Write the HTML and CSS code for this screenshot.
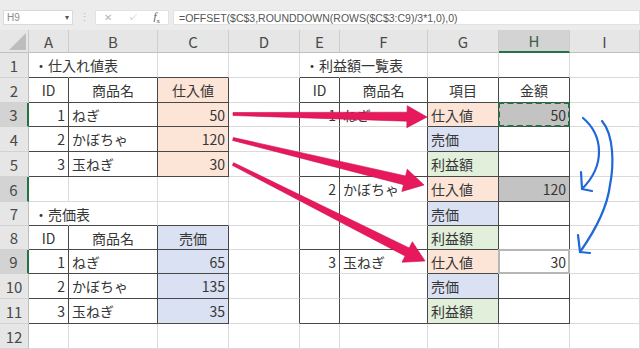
FILE: index.html
```html
<!DOCTYPE html>
<html lang="ja">
<head>
    <meta charset="UTF-8">
    <meta name="viewport" content="width=device-width, initial-scale=1.0">
    <link rel="stylesheet" href="styles.css">
    <title>利益額一覧表</title>
</head>
<body>

<div class="wrap">
    <div class="fbar">
        <div class="namebox"><span>H9</span><span class="dd">▾</span></div>
        <div class="grip">⋮</div>
        <div class="btns"><span>✕</span><span>✓</span><span class="fx"><i>f</i><sub>x</sub></span></div>
        <div class="formula">=OFFSET($C$3,ROUNDDOWN(ROWS($C$3:C9)/3*1,0),0)</div>
    </div>

    <div class="hdr">
        <div class="corner"><span class="tri"></span></div>
        <div class="ch">A</div>
        <div class="ch">B</div>
        <div class="ch">C</div>
        <div class="ch">D</div>
        <div class="ch">E</div>
        <div class="ch">F</div>
        <div class="ch">G</div>
        <div class="ch on">H</div>
        <div class="ch">I</div>
    </div>

    <!-- 1 -->
    <div class="row">
        <div class="rh">1</div>
        <div class="c title bb">・仕入れ値表</div>
        <div class="c bb"></div>
        <div class="c bb"></div>
        <div class="c"></div>
        <div class="c title bb">・利益額一覧表</div>
        <div class="c bb"></div>
        <div class="c bb"></div>
        <div class="c bb"></div>
        <div class="c"></div>
    </div>
    <!-- 2 -->
    <div class="row">
        <div class="rh">2</div>
        <div class="c m bx">ID</div>
        <div class="c m bx">商品名</div>
        <div class="c m bx peach">仕入値</div>
        <div class="c br"></div>
        <div class="c m bx">ID</div>
        <div class="c m bx">商品名</div>
        <div class="c m bx">項目</div>
        <div class="c m bx">金額</div>
        <div class="c"></div>
    </div>
    <!-- 3 -->
    <div class="row short">
        <div class="rh on">3</div>
        <div class="c r bx">1</div>
        <div class="c bx">ねぎ</div>
        <div class="c r bx peach">50</div>
        <div class="c br"></div>
        <div class="c r br">1</div>
        <div class="c br">ねぎ</div>
        <div class="c bx peach">仕入値</div>
        <div class="c r bx sel copy">50</div>
        <div class="c"></div>
    </div>
    <!-- 4 -->
    <div class="row">
        <div class="rh">4</div>
        <div class="c r bx">2</div>
        <div class="c bx">かぼちゃ</div>
        <div class="c r bx peach">120</div>
        <div class="c br"></div>
        <div class="c br"></div>
        <div class="c br"></div>
        <div class="c bx blue">売価</div>
        <div class="c bx"></div>
        <div class="c"></div>
    </div>
    <!-- 5 -->
    <div class="row">
        <div class="rh">5</div>
        <div class="c r bx">3</div>
        <div class="c bx">玉ねぎ</div>
        <div class="c r bx peach">30</div>
        <div class="c br"></div>
        <div class="c bx"></div>
        <div class="c bx"></div>
        <div class="c bx green">利益額</div>
        <div class="c bx"></div>
        <div class="c"></div>
    </div>
    <!-- 6 -->
    <div class="row">
        <div class="rh on">6</div>
        <div class="c"></div>
        <div class="c"></div>
        <div class="c"></div>
        <div class="c br"></div>
        <div class="c r br">2</div>
        <div class="c br">かぼちゃ</div>
        <div class="c bx peach">仕入値</div>
        <div class="c r bx sel">120</div>
        <div class="c"></div>
    </div>
    <!-- 7 -->
    <div class="row short">
        <div class="rh">7</div>
        <div class="c title bb">・売価表</div>
        <div class="c bb"></div>
        <div class="c bb"></div>
        <div class="c br"></div>
        <div class="c br"></div>
        <div class="c br"></div>
        <div class="c bx blue">売価</div>
        <div class="c bx"></div>
        <div class="c"></div>
    </div>
    <!-- 8 -->
    <div class="row short">
        <div class="rh">8</div>
        <div class="c m bx">ID</div>
        <div class="c m bx">商品名</div>
        <div class="c m bx blue">売価</div>
        <div class="c br"></div>
        <div class="c bx"></div>
        <div class="c bx"></div>
        <div class="c bx green">利益額</div>
        <div class="c bx"></div>
        <div class="c"></div>
    </div>
    <!-- 9 -->
    <div class="row short">
        <div class="rh on">9</div>
        <div class="c r bx">1</div>
        <div class="c bx">ねぎ</div>
        <div class="c r bx blue">65</div>
        <div class="c br"></div>
        <div class="c r br">3</div>
        <div class="c br">玉ねぎ</div>
        <div class="c bx peach">仕入値</div>
        <div class="c r bx active">30</div>
        <div class="c"></div>
    </div>
    <!-- 10 -->
    <div class="row">
        <div class="rh">10</div>
        <div class="c r bx">2</div>
        <div class="c bx">かぼちゃ</div>
        <div class="c r bx blue">135</div>
        <div class="c br"></div>
        <div class="c br"></div>
        <div class="c br"></div>
        <div class="c bx blue">売価</div>
        <div class="c bx"></div>
        <div class="c"></div>
    </div>
    <!-- 11 -->
    <div class="row">
        <div class="rh">11</div>
        <div class="c r bx">3</div>
        <div class="c bx">玉ねぎ</div>
        <div class="c r bx blue">35</div>
        <div class="c br"></div>
        <div class="c bx"></div>
        <div class="c bx"></div>
        <div class="c bx green">利益額</div>
        <div class="c bx"></div>
        <div class="c"></div>
    </div>
    <!-- 12 -->
    <div class="row">
        <div class="rh">12</div>
        <div class="c"></div>
        <div class="c"></div>
        <div class="c"></div>
        <div class="c"></div>
        <div class="c"></div>
        <div class="c"></div>
        <div class="c"></div>
        <div class="c"></div>
        <div class="c"></div>
    </div>

    <!-- 手書きの注釈 -->
    <svg class="notes" width="640" height="349" viewBox="0 0 640 349">
        <g class="red">
            <polygon points="233,112.5 407.1,112.2 407.2,105.7 427,117 406.8,127.7 406.9,121.2 233,115.5"/>
            <polygon points="233.35,137.54 405.61,175.95 407.25,169.14 424,185 401.87,191.5 403.51,184.69 232.65,140.46"/>
            <polygon points="233.68,162.66 409.18,247.96 412.34,241.72 425,261 401.96,262.24 405.12,256 232.32,165.34"/>
        </g>
        <g class="blue-pen">
            <path d="M583 118 C603 135 606 165 582 189"/>
            <path d="M581 172 L582 189 L592 191"/>
            <path d="M602 121 C614 135 614 165 610 185 C607 210 592 235 580 252"/>
            <path d="M578 235 L580 252 L590 253"/>
        </g>
    </svg>
</div>

</body>
</html>
```

FILE: styles.css
```css
body {
    margin: 0;
    background: #fff;
    font-family: "Noto Sans CJK JP", "Noto Sans", sans-serif;
    color: #363636;
}

.wrap {
    position: relative;
    width: 640px;
    height: 349px;
    overflow: hidden;
    --cols: 29px 40px 89px 71px 71px 40px 88px 71px 71px 70px;
}

/* 数式バー */
.fbar {
    height: 30px;
    box-sizing: border-box;
    background: #ececec;
    display: flex;
    align-items: flex-start;
    padding: 10px 0 0 3px;
    font-family: "Liberation Sans", sans-serif;
    color: #8a8a8a;
}

.namebox {
    width: 70px;
    height: 15px;
    box-sizing: border-box;
    background: #fff;
    border: 1px solid #dadada;
    display: flex;
    justify-content: space-between;
    align-items: center;
    padding: 0 3px;
    font-size: 10px;
}

.dd {
    font-size: 8px;
    color: #555;
}

.grip {
    width: 22px;
    text-align: center;
    font-size: 11px;
    line-height: 15px;
    color: #bbb;
}

.btns {
    width: 74px;
    height: 15px;
    box-sizing: border-box;
    background: #fff;
    border: 1px solid #e2e2e2;
    display: flex;
    justify-content: space-around;
    align-items: center;
    font-size: 10px;
    color: #b5b5b5;
}

.fx {
    font-family: "Liberation Serif", serif;
    color: #555;
    font-size: 11px;
}

.fx sub {
    font-size: 7px;
}

.formula {
    flex: 1;
    margin-left: 4px;
    height: 15px;
    box-sizing: border-box;
    background: #fff;
    border: 1px solid #e2e2e2;
    padding-left: 5px;
    font-size: 10.5px;
    line-height: 14px;
    color: #555;
}

/* 列見出し */
.hdr {
    display: grid;
    grid-template-columns: var(--cols);
    height: 23px;
    background: #e6e6e6;
}

.corner {
    display: flex;
    align-items: flex-end;
    justify-content: flex-end;
    padding: 0 2px 2px 0;
    border-right: 1px solid #c8c8c8;
    border-bottom: 1px solid #c0c0c0;
}

.tri {
    width: 0;
    height: 0;
    border-left: 17px solid transparent;
    border-bottom: 17px solid #bdbdbd;
}

.ch {
    display: flex;
    align-items: center;
    justify-content: center;
    border-right: 1px solid #cdcdcd;
    border-bottom: 1px solid #c0c0c0;
    font-size: 15px;
    color: #4a4a4a;
}

.ch.on {
    background: #d3d3d3;
    border-bottom: 2px solid #217346;
    color: #3b5e48;
}

/* 行 */
.row {
    display: grid;
    grid-template-columns: var(--cols);
    height: 25px;
}

.row.short {
    height: 24px;
}

.rh {
    display: flex;
    align-items: center;
    justify-content: center;
    background: #e6e6e6;
    border-right: 1px solid #c0c0c0;
    border-bottom: 1px solid #d2d2d2;
    font-size: 15px;
    color: #4a4a4a;
}

.rh.on {
    background: #d3d3d3;
    border-right: 2px solid #217346;
}

.c {
    display: flex;
    align-items: center;
    padding: 0 3px;
    border-right: 1px solid #dadada;
    border-bottom: 1px solid #dadada;
    font-size: 14px;
    white-space: nowrap;
    position: relative;
}

.r { justify-content: flex-end; }
.m { justify-content: center; }

.bx {
    border-right-color: #484848;
    border-bottom-color: #484848;
}

.br { border-right-color: #484848; }
.bb { border-bottom-color: #484848; }

.title {
    border-right-color: transparent;
    padding-left: 5px;
}

.peach { background: #fce4d6; }
.blue { background: #d9e1f2; }
.green { background: #e2efda; }
.sel { background: #c3c3c3; }

.copy::after {
    content: "";
    position: absolute;
    top: -1px;
    left: -1px;
    right: -1px;
    bottom: -1px;
    border: 2px dashed #2a6c45;
}

.active::after {
    content: "";
    position: absolute;
    top: -1px;
    left: -1px;
    right: -1px;
    bottom: -1px;
    border: 2px solid #b3b8b4;
}

/* 矢印と手書き線 */
.notes {
    position: absolute;
    top: 0;
    left: 0;
    pointer-events: none;
}

.red polygon {
    fill: #e8185c;
    stroke: #c8124c;
    stroke-width: 0.6;
    stroke-linejoin: round;
}

.blue-pen path {
    fill: none;
    stroke: #1f68d8;
    stroke-width: 2.2;
    stroke-linecap: round;
    stroke-linejoin: round;
}
```
